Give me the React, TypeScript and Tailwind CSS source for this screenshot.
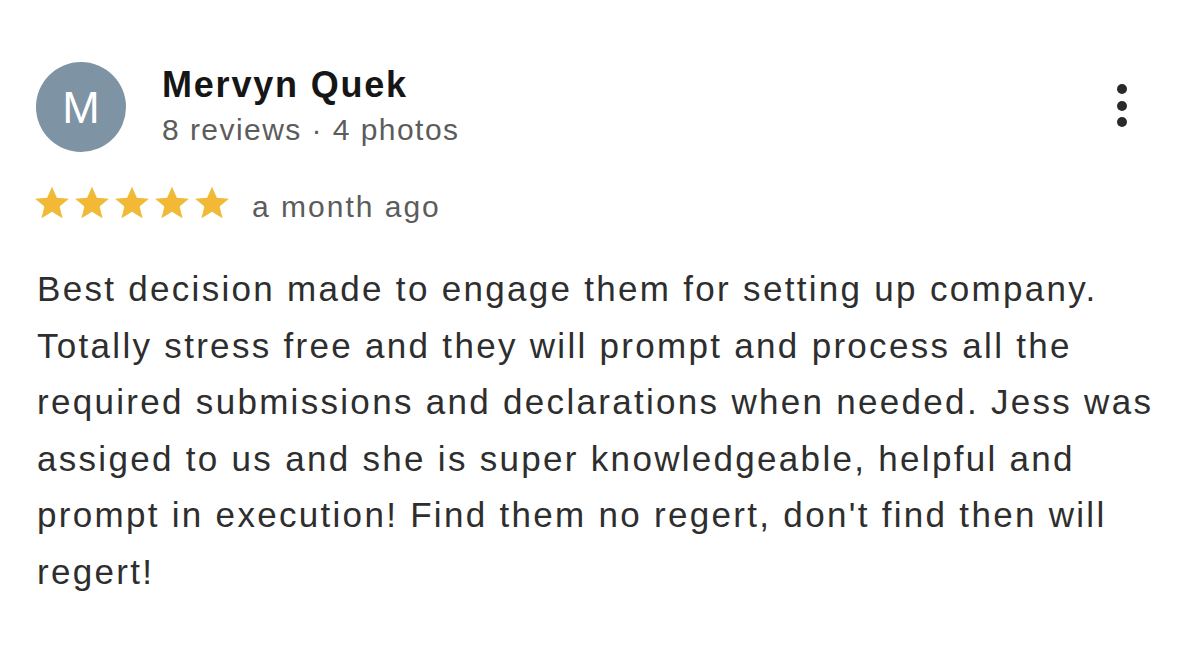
export default function App() {
  const lines = [
    "Best decision made to engage them for setting up company.",
    "Totally stress free and they will prompt and process all the",
    "required submissions and declarations when needed. Jess was",
    "assiged to us and she is super knowledgeable, helpful and",
    "prompt in execution! Find them no regert, don't find then will",
    "regert!",
  ];
  return (
    <div
      className="w-[1200px] h-[647px] bg-white overflow-hidden"
      style={{ fontFamily: '"Liberation Sans", Arial, sans-serif' }}
    >
      <div className="flex items-start pl-[36px] pt-[62px]">
        <div className="w-[90px] h-[90px] shrink-0 rounded-full bg-[#7e93a3] flex items-center justify-center text-white text-[45px] leading-none">
          M
        </div>
        <div className="ml-[36px] flex flex-col mt-[3px]">
          <div className="text-[36px] font-bold text-[#161616] leading-[40px] tracking-[1.8px]">
            Mervyn Quek
          </div>
          <div className="mt-[5px] text-[30px] text-[#5c5c5c] leading-[40px] tracking-[1.45px]">
            8 reviews · 4 photos
          </div>
        </div>
        <div className="ml-auto mr-[73px] mt-[22px] flex flex-col gap-[6.5px]">
          <div className="w-[10px] h-[10px] rounded-full bg-[#2a2a2a]" />
          <div className="w-[10px] h-[10px] rounded-full bg-[#2a2a2a]" />
          <div className="w-[10px] h-[10px] rounded-full bg-[#2a2a2a]" />
        </div>
      </div>
      <div className="flex items-center pl-[32px] mt-[31px]">
        <div className="flex">
          {[0, 1, 2, 3, 4].map((i) => (
            <svg key={i} width="40" height="40" viewBox="0 0 24 24">
              <path
                d="M12 2.2l2.9 6.6 7.2.6-5.5 4.7 1.7 7-6.3-3.8-6.3 3.8 1.7-7L1.9 9.4l7.2-.6z"
                fill="#f1b936"
              />
            </svg>
          ))}
        </div>
        <div className="ml-[20px] pt-[8px] text-[30px] text-[#5c5c5c] tracking-[2px] leading-none">
          a month ago
        </div>
      </div>
      <div className="pl-[37px] mt-[38px] text-[35px] leading-[56.5px] text-[#2e2e2e] tracking-[2.3px]">
        {lines.map((l, i) => (
          <div key={i} className="whitespace-nowrap">
            {l}
          </div>
        ))}
      </div>
    </div>
  );
}
